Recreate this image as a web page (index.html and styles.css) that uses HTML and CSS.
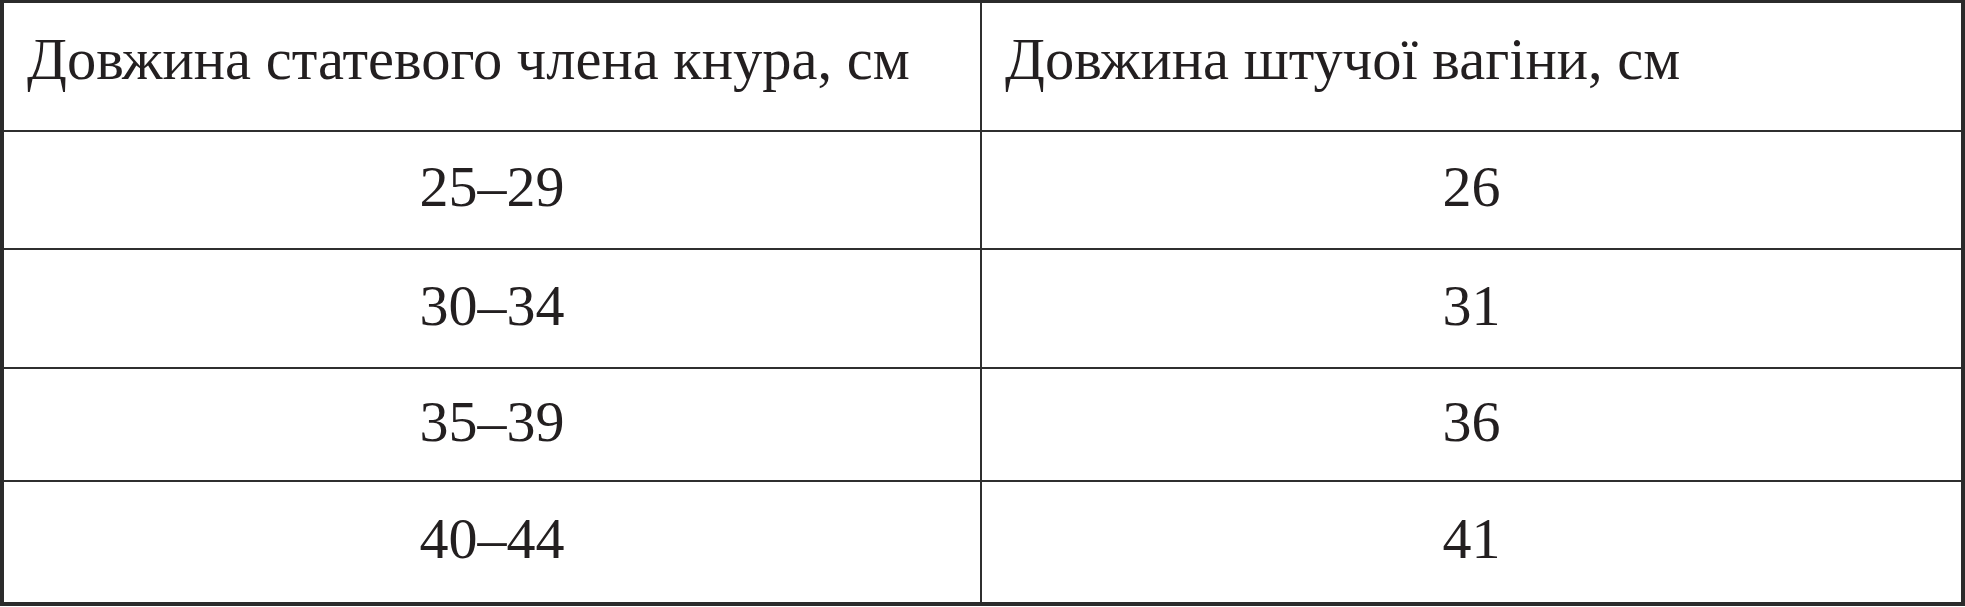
FILE: index.html
```html
<!DOCTYPE html>
<html lang="uk">
<head>
<meta charset="utf-8">
<title>Таблиця</title>
<link rel="stylesheet" href="styles.css">
</head>
<body>
<div class="table">
  <div class="cell head left">Довжина статевого члена кнура, см</div>
  <div class="cell head">Довжина штучої вагіни, см</div>
  <div class="cell num left">25–29</div>
  <div class="cell num">26</div>
  <div class="cell num left">30–34</div>
  <div class="cell num">31</div>
  <div class="cell num left">35–39</div>
  <div class="cell num">36</div>
  <div class="cell num left last">40–44</div>
  <div class="cell num last">41</div>
</div>
</body>
</html>
```
FILE: styles.css
```css
html, body {
  margin: 0;
  padding: 0;
  background: #ffffff;
}

.table {
  box-sizing: border-box;
  width: 1965px;
  height: 606px;
  border: 4px solid #2b2b2b;
  border-top-width: 3px;
  display: grid;
  grid-template-columns: 978px 1fr;
  grid-template-rows: 129px 118px 119px 113px 120px;
  font-family: "Liberation Serif", "Times New Roman", serif;
  color: #231f20;
}

.cell {
  box-sizing: border-box;
  border-bottom: 2px solid #2f2f2f;
  display: flex;
}

.cell.left {
  border-right: 2px solid #2f2f2f;
}

.cell.last {
  border-bottom: none;
}

.head {
  font-size: 58.5px;
  line-height: 1;
  padding: 28px 0 0 23px;
  align-items: flex-start;
}

.num {
  font-size: 58px;
  line-height: 1;
  justify-content: center;
  align-items: center;
  padding-bottom: 6px;
}
```
